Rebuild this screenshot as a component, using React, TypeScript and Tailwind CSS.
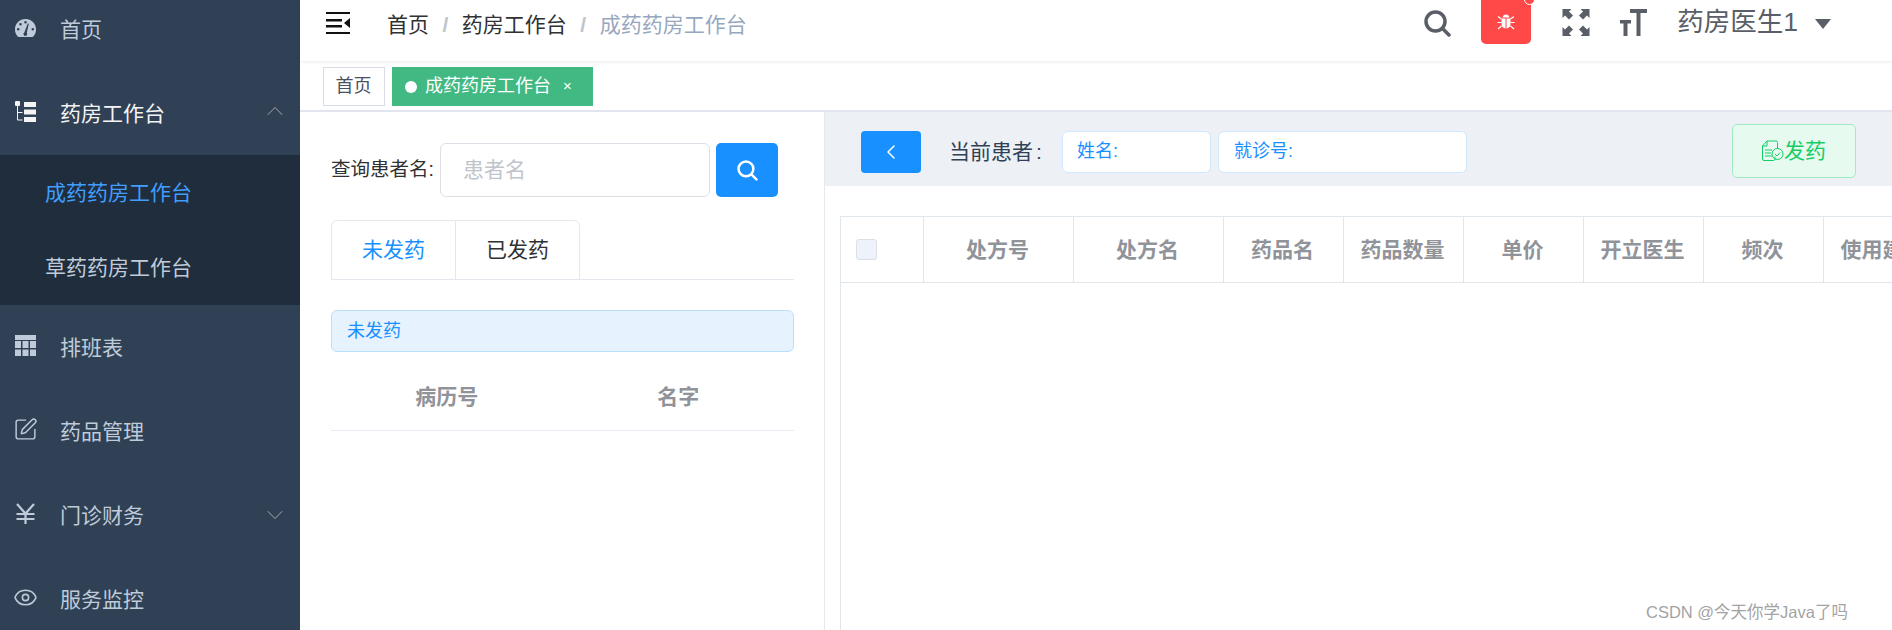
import React from 'react';
import { ChevronDown, ChevronLeft, ChevronUp, Eye, SquarePen } from 'lucide-react';

const fontStack = { fontFamily: '"Liberation Sans", "Noto Sans CJK SC", sans-serif' };

const GaugeIcon = () => (
    <svg width="21" height="18" viewBox="0 0 21 18">
        <path fill="#bfcbd9" fillRule="evenodd" d="M10.500 0C4.700 0 0 4.600 0 10.400c0 2.600.9 5 2.500 6.800.3.400.8.800 1.400.8h13.200c.6 0 1.100-.4 1.400-.8 1.600-1.800 2.500-4.200 2.500-6.800C21 4.600 16.300 0 10.500 0zM10.500 2a1.300 1.300 0 1 1 0 2.600 1.300 1.300 0 0 1 0-2.600zM5.500 4a1.300 1.300 0 1 1 0 2.600 1.300 1.300 0 0 1 0-2.600zM3.200 9a1.300 1.300 0 1 1 0 2.600 1.300 1.300 0 0 1 0-2.600zM17.800 9a1.300 1.300 0 1 1 0 2.600 1.300 1.300 0 0 1 0-2.600zM12.800 4.500l1 .3-2 9a1.900 1.900 0 1 1-2.500-.4z" />
    </svg>
);

const TreeIcon = () => (
    <svg width="21" height="21" viewBox="0 0 21 21">
        <rect x="0" y="0" width="5" height="5" rx="1" fill="#f4f4f5" />
        <path d="M2.500 5v14h5M2.500 11.500h5" stroke="#f4f4f5" strokeWidth="1" fill="none" />
        <rect x="9" y="1" width="12" height="5" fill="#f4f4f5" />
        <rect x="9" y="8.500" width="12" height="5" fill="#f4f4f5" />
        <rect x="9" y="16" width="12" height="5" fill="#f4f4f5" />
    </svg>
);

const TableIcon = () => (
    <svg width="21" height="21" viewBox="0 0 21 21" fill="#bfcbd9">
        <rect x="0" y="0" width="21" height="5" />
        <rect x="0" y="6" width="6" height="7" />
        <rect x="7.500" y="6" width="6" height="7" />
        <rect x="15" y="6" width="6" height="7" />
        <rect x="0" y="14.500" width="6" height="6.500" />
        <rect x="7.500" y="14.500" width="6" height="6.500" />
        <rect x="15" y="14.500" width="6" height="6.500" />
    </svg>
);

const YenIcon = () => (
    <svg width="21" height="21" viewBox="0 0 21 21" fill="none" stroke="#bfcbd9" strokeWidth="2.200">
        <path d="M2 1l8.500 9.500L19 1M10.500 10v11M1.500 11h18M1.500 16h18" />
    </svg>
);

const HamburgerIcon = () => (
    <svg width="24" height="22" viewBox="0 0 24 22" fill="#111">
        <rect x="0" y="0" width="24" height="2" />
        <rect x="0" y="7" width="16" height="2.500" />
        <rect x="0" y="13" width="16" height="2.500" />
        <rect x="0" y="20" width="24" height="2" />
        <path d="M24 6v10l-6-5z" />
    </svg>
);

const SearchGlyph = ({ size, color, strokeWidth }: { size: number; color: string; strokeWidth: number }) => (
    <svg width={size} height={size} viewBox="0 0 27 27" fill="none" stroke={color} strokeWidth={strokeWidth} strokeLinecap="round">
        <circle cx="11.500" cy="11.500" r="9.500" />
        <path d="M18.500 18.500L25 25" />
    </svg>
);

const BugIcon = () => (
    <svg width="18" height="18" viewBox="0 0 18 18" fill="#fff">
        <path d="M5.500 4.500C6 2.500 7.300 1.500 9 1.500s3 1 3.500 3z" />
        <path d="M4.500 5.500h4v10c-2.500-.2-4-2-4-4.500zM9.500 5.500h4V11c0 2.500-1.500 4.300-4 4.500z" />
        <path d="M1 3.500l3.500 2.500M17 3.500L13.500 6M.5 9.500h4M17.500 9.500h-4M1 16l3.500-3M17 16l-3.500-3" stroke="#fff" strokeWidth="1.200" />
    </svg>
);

const FullscreenIcon = () => (
    <svg width="28" height="27" viewBox="0 0 27 27" fill="#5a5e66">
        <path d="M0 0h9L6.500 2.500l4 4-4 4-4-4L0 9z" />
        <path d="M27 0h-9l2.500 2.500-4 4 4 4 4-4L27 9z" />
        <path d="M0 27h9l-2.500-2.500 4-4-4-4-4 4L0 18z" />
        <path d="M27 27h-9l2.500-2.500 -4-4 4-4 4 4L27 18z" />
    </svg>
);

const FontSizeIcon = () => (
    <svg width="27" height="27" viewBox="0 0 27 27" fill="#5a5e66">
        <path d="M10 0h17v4h-6.500v23h-4V4H10z" />
        <path d="M0 11h11v3.500H7.500V27h-4V14.500H0z" />
    </svg>
);

const DispenseIcon = () => (
    <svg width="22" height="22" viewBox="0 0 22 22" fill="none" stroke="#13ce66" strokeWidth="1">
        <path d="M13 16.500V19a1.500 1.500 0 0 1-1.500 1.500H2A1.500 1.500 0 0 1 .5 19V6L5 1h9a1.500 1.500 0 0 1 1.500 1.500V9" />
        <path d="M5 1v5H.5M3 10h7M3 13h6M3 16h7" />
        <circle cx="15.500" cy="14" r="5.500" />
        <path d="M13 14l2 2 3-3.500" />
    </svg>
);

const navBottom = [
    { id: 'schedule', name: '排班表', icon: <TableIcon /> },
    { id: 'drugs', name: '药品管理', icon: <SquarePen size={25} color="#bfcbd9" strokeWidth={1.4} className="-ml-[2px]" /> },
    { id: 'finance', name: '门诊财务', icon: <YenIcon />, arrow: true },
    { id: 'monitor', name: '服务监控', icon: <Eye size={25} color="#bfcbd9" strokeWidth={1.5} className="-ml-[2px]" /> },
];

const columns = [
    { name: '处方号', width: 'w-[150px]' },
    { name: '处方名', width: 'w-[150px]' },
    { name: '药品名', width: 'w-[120px]' },
    { name: '药品数量', width: 'w-[120px]' },
    { name: '单价', width: 'w-[120px]' },
    { name: '开立医生', width: 'w-[120px]' },
    { name: '频次', width: 'w-[120px]' },
    { name: '使用建议', width: 'w-[120px]' },
];

const NavItem = ({ name, icon, arrow }: { name: string; icon: React.ReactNode; arrow?: boolean }) => (
    <div className="flex h-[84px] items-center pl-[15px] text-[21px] text-[#bfcbd9]">
        <span className="-mt-[3px] flex w-[45px] shrink-0 items-center">{icon}</span>
        <span className="mt-[1px] flex-1">{name}</span>
        {arrow && <ChevronDown size={28} color="#909399" strokeWidth={0.9} className="mr-[11px]" />}
    </div>
);

export default function App() {
    return (
        <div className="flex h-[630px] w-[1892px] overflow-hidden bg-white text-[#303133]" style={fontStack}>
            {/* Sidebar */}
            <div className="w-[300px] shrink-0 overflow-hidden bg-[#304156]">
                <div className="-mt-[13px]">
                    <NavItem name="首页" icon={<GaugeIcon />} />
                    <div className="flex h-[84px] items-center pl-[15px] text-[21px] text-[#f4f4f5]">
                        <span className="-mt-[3px] flex w-[45px] shrink-0 items-center"><TreeIcon /></span>
                        <span className="mt-[1px] flex-1">药房工作台</span>
                        <ChevronUp size={28} color="#909399" strokeWidth={0.9} className="mr-[11px] -mt-[4px]" />
                    </div>
                    <div className="bg-[#1f2d3d] text-[21px]">
                        <div className="flex h-[75px] items-center pl-[45px] text-[#409eff]">成药药房工作台</div>
                        <div className="flex h-[75px] items-center pl-[45px] text-[#bfcbd9]">草药药房工作台</div>
                    </div>
                    {navBottom.map((item) => (
                        <NavItem key={item.id} name={item.name} icon={item.icon} arrow={item.arrow} />
                    ))}
                </div>
            </div>

            {/* Main */}
            <div className="flex min-w-0 flex-1 flex-col">
                {/* Header */}
                <div className="relative z-10 flex h-[61px] shrink-0 items-start bg-white shadow-[0_1px_4px_rgba(0,21,41,0.08)]">
                    <div className="ml-[26px] mt-[12px]"><HamburgerIcon /></div>
                    <div className="ml-[37px] mt-[10px] flex items-center text-[21px] leading-[30px]">
                        <span>首页</span>
                        <span className="mx-[13.500px] font-bold text-[#c0c4cc]">/</span>
                        <span>药房工作台</span>
                        <span className="mx-[13.500px] font-bold text-[#c0c4cc]">/</span>
                        <span className="text-[#97a8be]">成药药房工作台</span>
                    </div>
                    <div className="ml-auto flex items-start text-[#5a5e66]">
                        <div className="mt-[10px]"><SearchGlyph size={27} color="#5a5e66" strokeWidth={3.5} /></div>
                        <div className="relative ml-[30px] flex h-[44px] w-[50px] items-center justify-center rounded-b-[5px] bg-[#ff4949]">
                            <BugIcon />
                            <span className="absolute -right-[4px] -top-[6px] h-[11px] w-[11px] rounded-full border border-white bg-[#ff4949]"></span>
                        </div>
                        <div className="ml-[31px] mt-[9px]"><FullscreenIcon /></div>
                        <div className="ml-[30px] mt-[9px]"><FontSizeIcon /></div>
                        <span className="ml-[30px] mt-[4px] text-[26.500px] leading-[36px]">药房医生1</span>
                        <span className="ml-[17px] mr-[61px] mt-[19px] h-0 w-0 border-x-[8px] border-t-[10px] border-x-transparent border-t-[#5a5e66]"></span>
                    </div>
                </div>

                {/* Tags */}
                <div className="flex h-[51px] shrink-0 items-start gap-[7px] border-b-2 border-[#e2e5f0] bg-white pl-[23px] pt-[6px] text-[18px]">
                    <div className="flex h-[39px] w-[62px] items-center justify-center border border-[#d8dce5] pr-[1px] text-[#495060]">首页</div>
                    <div className="flex h-[39px] w-[201px] items-center bg-[#42b983] pl-[13px] text-white">
                        <span className="mr-[8px] h-[12px] w-[12px] rounded-full bg-white"></span>
                        <span>成药药房工作台</span>
                        <span className="ml-[12px] text-[15px]">×</span>
                    </div>
                </div>

                {/* Content */}
                <div className="flex min-h-0 flex-1">
                    {/* Patient list */}
                    <div className="w-[525px] shrink-0 border-r border-[#e6e8ef] pl-[31px] pr-[30px] pt-[31px]">
                        <div className="flex items-center">
                            <span className="w-[109px] text-[19.500px]">查询患者名:</span>
                            <div className="flex h-[54px] w-[270px] items-center rounded-[6px] border border-[#dcdfe6] pl-[22px] text-[21px] text-[#c0c4cc]">患者名</div>
                            <div className="ml-[6px] flex h-[54px] w-[62px] items-center justify-center rounded-[5px] bg-[#1890ff]">
                                <SearchGlyph size={21} color="#fff" strokeWidth={3.2} />
                            </div>
                        </div>
                        <div className="mt-[23px] flex h-[60px] items-stretch border-b border-[#e4e7ed]">
                            <div className="-mb-px flex w-[249px] rounded-t-[6px] border border-[#e4e7ed] text-[21px]">
                                <div className="flex w-[124px] items-center justify-center border-r border-[#e4e7ed] text-[#1890ff]">未发药</div>
                                <div className="flex flex-1 items-center justify-center">已发药</div>
                            </div>
                        </div>
                        <div className="mt-[30px] flex h-[42px] items-center rounded-[6px] border border-[#bae0fb] bg-[#e6f2fd] pl-[15px] text-[18px] text-[#1890ff]">未发药</div>
                        <div className="mt-[14px] flex h-[65px] items-center border-b border-[#e6ebf5] pb-[2px] text-[21px] font-bold text-[#909399]">
                            <span className="flex-1 text-center">病历号</span>
                            <span className="flex-1 text-center">名字</span>
                        </div>
                    </div>

                    {/* Prescription detail */}
                    <div className="min-w-0 flex-1 overflow-hidden">
                        <div className="flex h-[74px] items-center bg-[#edf0f5] pl-[36px] pt-[5px]">
                            <div className="flex h-[42px] w-[60px] items-center justify-center rounded-[4px] bg-[#1890ff]">
                                <ChevronLeft size={24} color="#fff" strokeWidth={1.5} />
                            </div>
                            <span className="ml-[28px] w-[113px] text-[21px] text-[#304156]">当前患者<span className="ml-[3px]">:</span></span>
                            <div className="flex h-[42px] w-[149px] items-center rounded-[6px] border border-[#d1e9ff] bg-white pl-[14px] text-[18px] text-[#1890ff]">姓名:</div>
                            <div className="ml-[7px] flex h-[42px] w-[249px] items-center rounded-[6px] border border-[#d1e9ff] bg-white pl-[15px] text-[18px] text-[#1890ff]">就诊号:</div>
                            <div className="ml-[265px] -mt-[2px] flex h-[54px] w-[124px] shrink-0 items-center justify-center rounded-[5px] border border-[#a1ebc2] bg-[#e7faf0] text-[21px] text-[#13ce66]">
                                <DispenseIcon />
                                <span>发药</span>
                            </div>
                        </div>
                        <div className="ml-[15px] mt-[30px] h-[420px] w-[1100px] border-l border-t border-[#dfe6ec]">
                            <div className="flex h-[66px] border-b border-[#dfe6ec] text-[21px] font-bold text-[#909399]">
                                <div className="flex w-[83px] shrink-0 items-center border-r border-[#dfe6ec] pl-[15px]">
                                    <span className="h-[21px] w-[21px] rounded-[3px] border border-[#dcdfe6] bg-[#edf2fc]"></span>
                                </div>
                                {columns.map((col) => (
                                    <div key={col.name} className={`flex ${col.width} shrink-0 items-center justify-center border-r border-[#dfe6ec] pr-[2px]`}>
                                        {col.name}
                                    </div>
                                ))}
                            </div>
                        </div>
                    </div>
                </div>
            </div>

            {/* Watermark */}
            <span className="absolute left-[1646px] top-[601px] text-[16.500px] leading-[22px] text-[#a3a3a3]">CSDN @今天你学Java了吗</span>
        </div>
    );
}
